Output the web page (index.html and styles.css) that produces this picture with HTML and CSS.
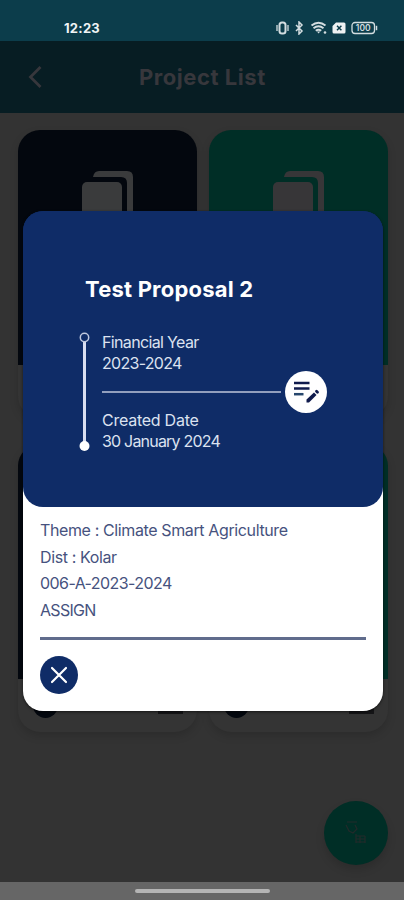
FILE: index.html
```
<!DOCTYPE html>
<html lang="en">
    <head>
        <meta charset="UTF-8" />
        <meta name="viewport" content="width=device-width, initial-scale=1.0" />
        <title>Project List</title>
        <link rel="stylesheet" href="styles.css">
    </head>
    <body>
        <div class="status-bar">
            <span class="time">12:23</span>
            <svg class="status-icons" width="102" height="14" viewBox="0 0 102 14" fill="none" stroke="#d3dde0">
                <rect x="3.5" y="1.5" width="6" height="11" rx="2.500" stroke-width="2"></rect>
                <path d="M1 4v6M12 4v6" stroke-width="1.300"></path>
                <path d="M20 4l6 6-3 3V1l3 3-6 6" stroke-width="1.500"></path>
                <path d="M35.500 4.500q7-5.500 14 0M37.500 7.200q5-3.800 10 0M39.800 9.800q2.700-2 5.400 0" stroke-width="2"></path>
                <path d="M41 10.500h3.200l-1.600 2z" fill="#d3dde0" stroke="none"></path>
                <circle cx="49" cy="11.500" r="1.300" fill="#d3dde0" stroke="none"></circle>
                <path d="M60 1.500H68a1.500 1.500 0 0 1 1.500 1.500v8a1.500 1.500 0 0 1-1.500 1.500H58a1.500 1.500 0 0 1-1.500-1.500V5z" fill="#eef2f3" stroke="none"></path>
                <path d="M61 4.800l4.400 4.400M65.400 4.800L61 9.200" stroke="#0c3d4b" stroke-width="1.500"></path>
                <rect x="76" y="1.500" width="22.500" height="11" rx="3" stroke-width="1.300"></rect>
                <path d="M100.500 4.800v4.400" stroke-width="1.500"></path>
                <text x="87.200" y="10.300" class="battery-text">100</text>
            </svg>
        </div>
        <header class="header">
            <svg class="back" width="14" height="24" viewBox="0 0 14 24" fill="none" stroke="currentColor" stroke-width="2.800">
                <polyline points="12.500 2 2.500 12 12.500 22"></polyline>
            </svg>
            <h1>Project List</h1>
        </header>
        <main class="projects">
            <div class="card">
                <div class="card-top">
                    <svg width="52" height="60" viewBox="0 0 52 60" fill="currentColor">
                        <rect x="0" y="11" width="40" height="49" rx="5"></rect>
                        <path d="M11 6q1-6 6-6h28q6 0 6 6v45h-6V12q0-6-6-6z"></path>
                    </svg>
                </div>
            </div>
            <div class="card green">
                <div class="card-top">
                    <svg width="52" height="60" viewBox="0 0 52 60" fill="currentColor">
                        <rect x="0" y="11" width="40" height="49" rx="5"></rect>
                        <path d="M11 6q1-6 6-6h28q6 0 6 6v45h-6V12q0-6-6-6z"></path>
                    </svg>
                </div>
            </div>
            <div class="card">
                <div class="card-top"></div>
                <div class="card-foot"><span class="dot"></span><span class="bar"></span></div>
            </div>
            <div class="card green">
                <div class="card-top"></div>
                <div class="card-foot"><span class="dot"></span><span class="bar"></span></div>
            </div>
        </main>
        <div class="fab">
            <svg width="22" height="26" viewBox="0 0 22 26" fill="none" stroke="currentColor" stroke-width="1.200">
                <path d="M2 2h10M1 5l3 6 4 2 4-4-2-4M11 16h9M11 19h9M11 22h9M11 14v9M15 16v7M20 16v7"></path>
            </svg>
        </div>
        <footer class="nav-bar"><span class="handle"></span></footer>

        <div class="modal">
            <div class="modal-top">
                <h2>Test Proposal 2</h2>
                <div class="timeline">
                    <svg width="12" height="121" viewBox="0 0 12 121">
                        <path d="M5.500 10v105" stroke="#d9def0" stroke-width="3"></path>
                        <circle cx="5.500" cy="5.500" r="4.200" fill="#0f2c67" stroke="#c0c9df" stroke-width="1.500"></circle>
                        <circle cx="5.500" cy="114" r="5" fill="#fff"></circle>
                    </svg>
                    <div class="dates">
                        <p class="year">Financial Year</p>
                        <p class="year-value">2023-2024</p>
                        <div class="split">
                            <span class="line"></span>
                            <span class="edit">
                                <svg width="28" height="24" viewBox="0 0 28 24" fill="none" stroke="#101b4d">
                                    <path d="M2 3h15.500M2 8.500h15.500" stroke-width="2.500"></path>
                                    <path d="M2 14.200h9.500" stroke="#27476d" stroke-width="2.500"></path>
                                    <path d="M14.500 22.500v-3l7.500-7 2.500 2.500-7.500 7.500z" fill="#101b4d" stroke="none"></path>
                                    <path d="M24.500 11.300l1 1" stroke-width="2.800" stroke-linecap="round"></path>
                                </svg>
                            </span>
                        </div>
                        <p class="created">Created Date</p>
                        <p class="created-value">30 January 2024</p>
                    </div>
                </div>
            </div>
            <div class="modal-body">
                <p class="theme">Theme : Climate Smart Agriculture</p>
                <p class="dist">Dist : Kolar</p>
                <p class="code">006-A-2023-2024</p>
                <p class="state">ASSIGN</p>
                <hr>
                <button class="close" aria-label="Close">
                    <svg width="18" height="18" viewBox="0 0 18 18" stroke="#fff" stroke-width="2.200" stroke-linecap="round">
                        <path d="M2 2l14 14M16 2L2 16"></path>
                    </svg>
                </button>
            </div>
        </div>
    </body>
</html>
```
FILE: styles.css
```
*,
*::before,
*::after {
    box-sizing: border-box;
}

body {
    margin: 0;
    width: 404px;
    height: 900px;
    overflow: hidden;
    position: relative;
    display: flex;
    flex-direction: column;
    background: #333333;
    font-family: Inter, "Noto Sans", sans-serif;
}

h1,
h2,
p {
    margin: 0;
    white-space: nowrap;
}

svg {
    display: block;
    flex: none;
}

.status-bar {
    display: flex;
    justify-content: space-between;
    align-items: flex-start;
    height: 41px;
    padding: 21px 26px 0 64px;
    background: #0c3d4b;
}
.time {
    font-size: 13px;
    line-height: 15px;
    font-weight: 700;
    letter-spacing: 0.25px;
    color: #f0f4f5;
}
.battery-text {
    fill: #d3dde0;
    stroke: none;
    font-size: 8.5px;
    font-weight: 600;
    text-anchor: middle;
}

.header {
    display: flex;
    align-items: center;
    height: 72px;
    padding-left: 28px;
    background: #071d23;
    color: #37373c;
}
.header h1 {
    margin-left: 97px;
    font-size: 22px;
    font-weight: 700;
    letter-spacing: 0.55px;
}

.projects {
    display: grid;
    grid-template-columns: 179.500px 179.500px;
    grid-auto-rows: 288px;
    gap: 26px 11.500px;
    padding: 17px 0 0 17.500px;
}
.card {
    border-radius: 22px;
    overflow: hidden;
    background: #343434;
    box-shadow: 0 4px 9px rgba(0, 0, 0, 0.15);
}
.card-top {
    height: 235px;
    padding: 41px 0 0 64px;
    background: #03070e;
    color: #3a3b3c;
}
.green .card-top {
    background: #002e26;
    color: #373638;
}
.card-foot {
    display: flex;
    justify-content: space-between;
    padding: 14px 14px 0 15px;
}
.dot {
    width: 25px;
    height: 25px;
    border-radius: 50%;
    background: #03070e;
}
.bar {
    width: 25px;
    height: 21px;
    background: #151517;
}

.fab {
    position: absolute;
    left: 324px;
    top: 801px;
    width: 64px;
    height: 64px;
    padding: 19px 0 0 21px;
    border-radius: 50%;
    background: #002e26;
    color: #222a2a;
    box-shadow: 0 5px 8px rgba(0, 0, 0, 0.15);
}

.nav-bar {
    display: flex;
    justify-content: center;
    height: 18px;
    margin-top: auto;
    padding-top: 7px;
    background: #666666;
}
.handle {
    width: 135px;
    height: 4px;
    border-radius: 2px;
    background: #b4b4b4;
}

.modal {
    position: absolute;
    left: 23px;
    top: 211px;
    width: 360px;
    height: 500px;
    border-radius: 20px;
    overflow: hidden;
    background: linear-gradient(#0f2c67 50%, #fff 50%);
    box-shadow: 0 1px 3px rgba(0, 0, 0, 0.6);
}
.modal-top {
    height: 296px;
    padding: 63px 55px 0 56px;
    border-radius: 0 0 20px 20px;
    background: #0f2c67;
    color: #fff;
}
.modal-top h2 {
    padding-left: 6px;
    font-size: 22px;
    line-height: 30px;
    font-weight: 700;
    letter-spacing: 0.2px;
}
.timeline {
    display: flex;
    gap: 11px;
    margin-top: 28px;
}
.dates {
    width: 225px;
    font-size: 16px;
    line-height: 21px;
    color: #dce2f0;
}
.year {
    letter-spacing: -0.65px;
}
.year-value {
    letter-spacing: -0.7px;
}
.created {
    letter-spacing: -0.25px;
}
.created-value {
    letter-spacing: -0.8px;
}
.split {
    display: flex;
    align-items: center;
    justify-content: space-between;
    height: 42px;
    margin: -3px 0;
}
.line {
    width: 179px;
    height: 2px;
    background: #929fbd;
}
.edit {
    display: flex;
    align-items: center;
    justify-content: center;
    width: 42px;
    height: 42px;
    border-radius: 50%;
    background: #fff;
}

.modal-body {
    padding: 10px 17px 0;
    font-size: 16px;
    line-height: 26.500px;
    color: #46527e;
}
.theme,
.dist {
    letter-spacing: -0.38px;
}
.code {
    letter-spacing: -0.57px;
}
.state {
    letter-spacing: -0.7px;
}
.modal-body hr {
    height: 3px;
    margin: 13.500px 0 16.500px;
    border: 0;
    background: #606c8c;
}
.close {
    display: flex;
    align-items: center;
    justify-content: center;
    width: 38px;
    height: 38px;
    padding: 0;
    border: 0;
    border-radius: 50%;
    background: #0f2c67;
}
```
